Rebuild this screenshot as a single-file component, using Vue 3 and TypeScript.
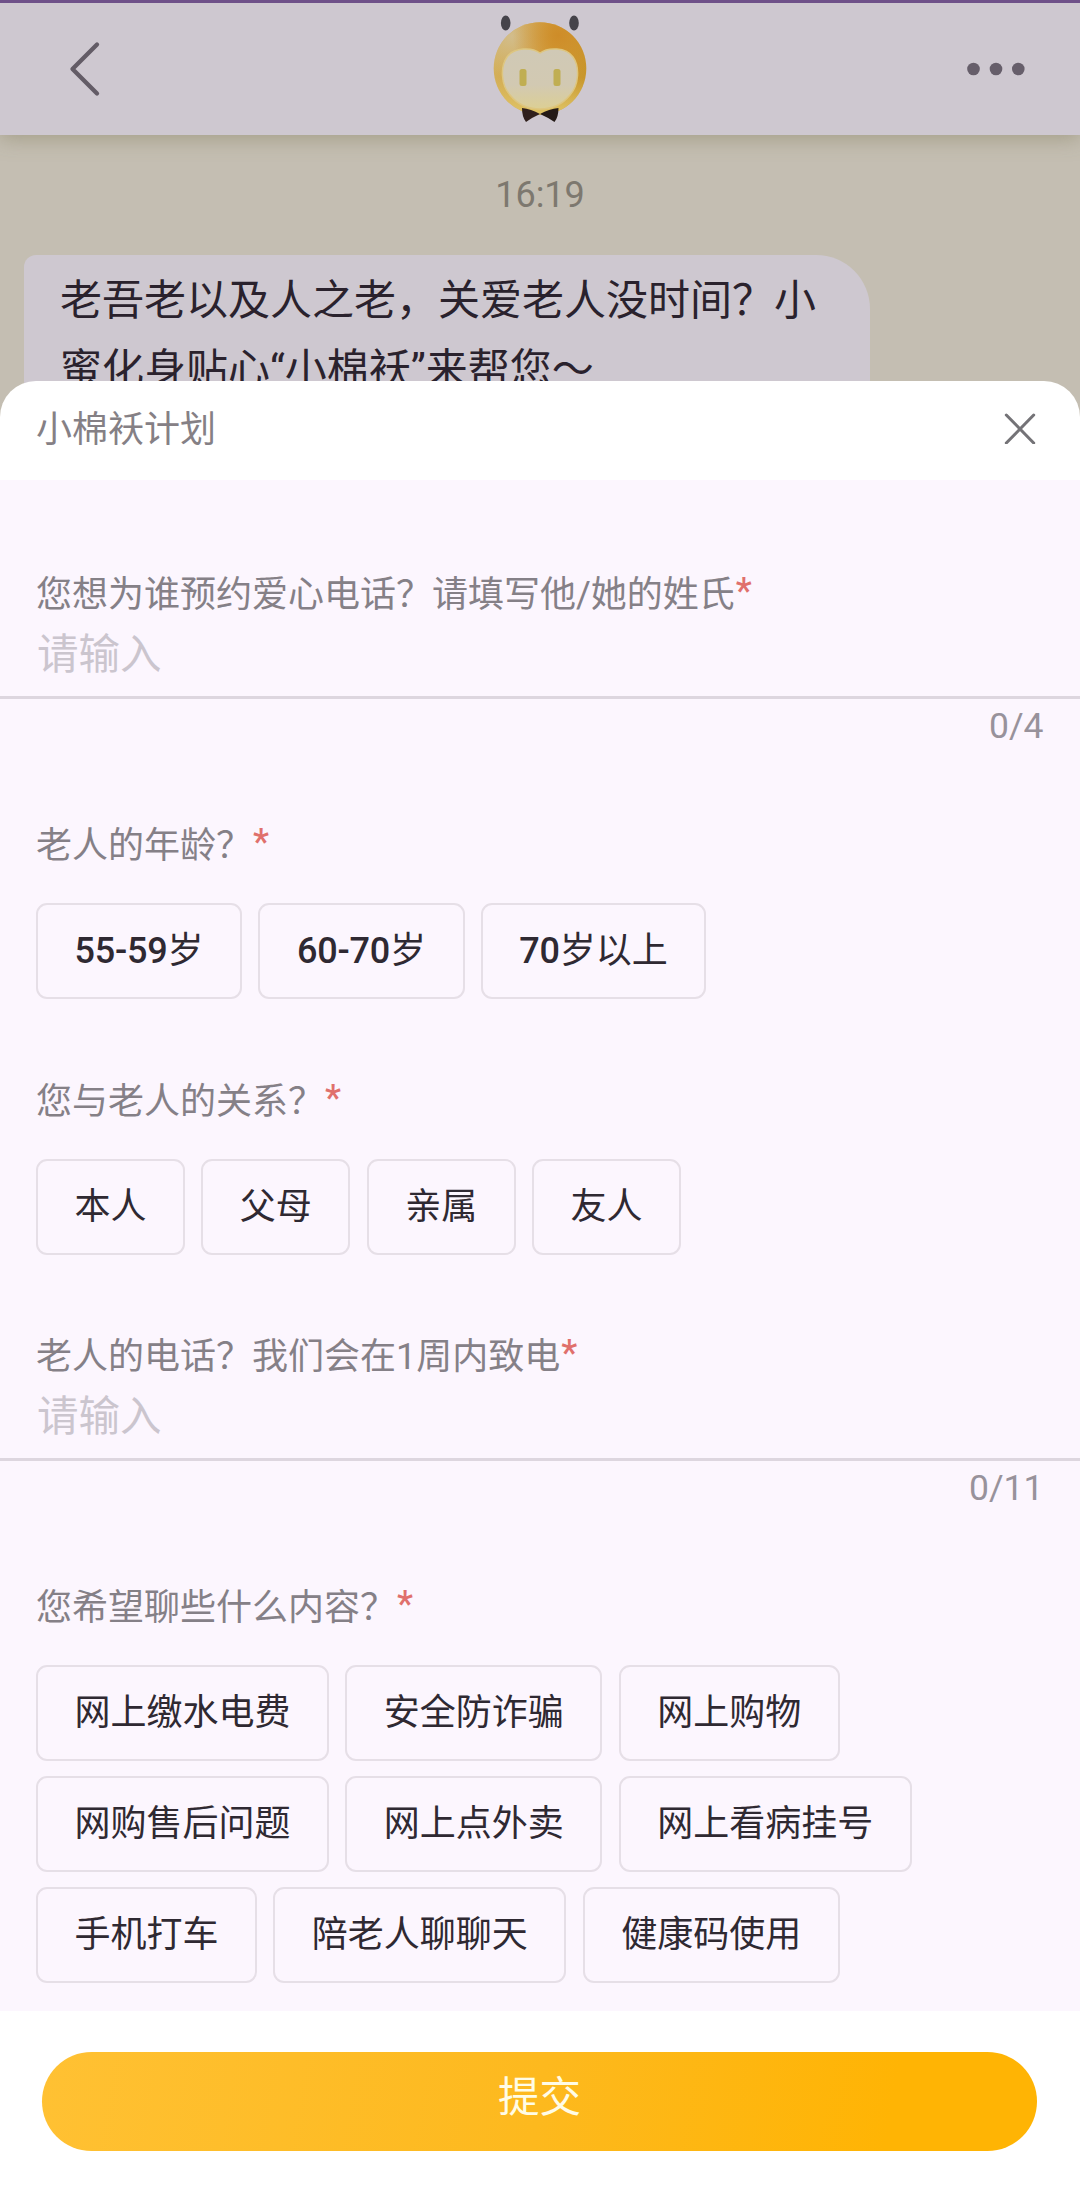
<script setup lang="ts">
interface InputQuestion {
  kind: 'input'
  label: string
  max: number
}
interface ChoiceQuestion {
  kind: 'choice'
  label: string
  options: string[]
}
type Question = InputQuestion | ChoiceQuestion

const questions: Question[] = [
  { kind: 'input', label: '您想为谁预约爱心电话？请填写他/她的姓氏', max: 4 },
  { kind: 'choice', label: '老人的年龄？', options: ['55-59岁', '60-70岁', '70岁以上'] },
  { kind: 'choice', label: '您与老人的关系？', options: ['本人', '父母', '亲属', '友人'] },
  { kind: 'input', label: '老人的电话？我们会在1周内致电', max: 11 },
  {
    kind: 'choice',
    label: '您希望聊些什么内容？',
    options: [
      '网上缴水电费', '安全防诈骗', '网上购物',
      '网购售后问题', '网上点外卖', '网上看病挂号',
      '手机打车', '陪老人聊聊天', '健康码使用',
    ],
  },
]

// Latin digits are set heavier than the Chinese characters beside them
const digits = (s: string): string => s.match(/^[\d-]+/)?.[0] ?? ''
const rest = (s: string): string => s.slice(digits(s).length)
</script>

<template>
  <div class="screen">
    <header class="nav">
      <svg class="back" width="40" height="60" viewBox="0 0 40 60">
        <path d="M32 5.500 L7.500 30 L32 54.500" />
      </svg>
      <svg class="owl" width="110" height="120" viewBox="485 5 110 120">
        <defs>
          <linearGradient id="head" x1="0" y1="0.3" x2="1" y2="0.5">
            <stop offset="0" stop-color="#d3b05a" />
            <stop offset="0.5" stop-color="#d5a544" />
            <stop offset="1" stop-color="#c8962b" />
          </linearGradient>
          <radialGradient id="glow" cx="0.7" cy="0.14" r="0.5">
            <stop offset="0" stop-color="#ce8c28" />
            <stop offset="1" stop-color="#ce8c28" stop-opacity="0" />
          </radialGradient>
          <radialGradient id="pale" cx="0.2" cy="0.15" r="0.45">
            <stop offset="0" stop-color="#d2bd8c" />
            <stop offset="1" stop-color="#d2bd8c" stop-opacity="0" />
          </radialGradient>
          <linearGradient id="sheen" x1="0" y1="0" x2="0" y2="1">
            <stop offset="0.6" stop-color="#dfc567" stop-opacity="0" />
            <stop offset="1" stop-color="#dfc567" />
          </linearGradient>
          <linearGradient id="face" x1="0" y1="0" x2="0" y2="1">
            <stop offset="0" stop-color="#d0c9b6" />
            <stop offset="0.6" stop-color="#d2c9b2" />
            <stop offset="1" stop-color="#dccf94" />
          </linearGradient>
        </defs>
        <circle cx="540" cy="67.500" r="46.300" fill="url(#head)" />
        <circle cx="540" cy="67.500" r="46.300" fill="url(#sheen)" />
        <circle cx="540" cy="67.500" r="46.300" fill="url(#pale)" />
        <circle cx="540" cy="67.500" r="46.300" fill="url(#glow)" />
        <ellipse cx="505.700" cy="22" rx="4.800" ry="7.500" fill="#45434a" />
        <ellipse cx="574" cy="22" rx="4.800" ry="7.500" fill="#45434a" />
        <path
          d="M540 52 C532 46 514 46 507 56 C500 66 501 84 510 94 C518 104 529 108 540 108 C551 108 562 104 570 94 C579 84 580 66 573 56 C566 46 548 46 540 52 Z"
          fill="url(#face)" stroke="#ddc681" stroke-width="1.500"
        />
        <rect x="519.500" y="68" width="7" height="17" rx="2.500" fill="#c0ae52" />
        <rect x="553.500" y="68" width="7" height="17" rx="2.500" fill="#c0ae52" />
        <path d="M522 107 Q531 108 540 113 Q533 116 526 121 Q522 116 522 107 Z" fill="#30201c" />
        <path d="M558.500 107 Q549 108 540 113 Q547 116 554.500 121 Q558.500 116 558.500 107 Z" fill="#241a16" />
      </svg>
      <svg class="more" width="60" height="20" viewBox="0 0 60 20">
        <circle cx="7.500" cy="10" r="6.300" />
        <circle cx="30" cy="10" r="6.300" />
        <circle cx="52.300" cy="10" r="6.300" />
      </svg>
    </header>

    <section class="chat">
      <div class="time">16:19</div>
      <div class="bubble">老吾老以及人之老，关爱老人没时间？小<br />蜜化身贴心“小棉袄”来帮您～</div>
    </section>

    <section class="sheet">
      <div class="sheet-head">
        <span>小棉袄计划</span>
        <svg width="32" height="32" viewBox="0 0 32 32">
          <path d="M2.300 3 L29.700 31 M29.700 3 L2.300 31" />
        </svg>
      </div>

      <main class="form">
        <div v-for="q in questions" :key="q.label" class="question" :class="q.kind">
          <div class="label">{{ q.label }}<span class="star">*</span></div>
          <template v-if="q.kind === 'input'">
            <div class="field">请输入</div>
            <div class="count">0/{{ q.max }}</div>
          </template>
          <div v-else class="chips">
            <div v-for="o in q.options" :key="o" class="chip"><b v-if="digits(o)">{{ digits(o) }}</b>{{ rest(o) }}</div>
          </div>
        </div>
      </main>

      <footer class="foot">
        <div class="submit">提交</div>
      </footer>
    </section>
  </div>
</template>

<style>
body {
  margin: 0;
}
</style>

<style scoped>
.screen {
  box-sizing: border-box;
  width: 1080px;
  height: 2193px;
  overflow: hidden;
  display: flex;
  flex-direction: column;
  background: #c4beb2;
  font-family: Roboto, "Noto Sans CJK SC", sans-serif;
  font-size: 36px;
}
.nav {
  box-sizing: border-box;
  flex: none;
  height: 135px;
  padding: 0 54px 0 65px;
  border-top: 3px solid #6f5189;
  display: grid;
  grid-template-columns: 1fr 110px 1fr;
  align-items: center;
  background: #cec8d0;
  box-shadow: 0 3px 20px rgba(120, 116, 80, 0.45);
}
.back path {
  fill: none;
  stroke: #635c66;
  stroke-width: 4.300;
  stroke-linecap: round;
  stroke-linejoin: round;
}
.owl {
  margin: -7px 0 0 -5.500px;
}
.more {
  justify-self: end;
  fill: #665e6a;
}
.chat {
  flex: none;
  height: 246px;
}
.time {
  box-sizing: border-box;
  height: 120px;
  padding-top: 35px;
  line-height: 50px;
  text-align: center;
  color: #7d786f;
}
.bubble {
  box-sizing: border-box;
  width: 846px;
  height: 150px;
  margin-left: 24px;
  padding: 11px 0 0 36px;
  border-radius: 12px 54px 0 0;
  background: #cec8d0;
  color: #2a222d;
  font-size: 42px;
  line-height: 69px;
  white-space: nowrap;
}
.sheet {
  position: relative;
  flex: 1;
  display: flex;
  flex-direction: column;
  border-radius: 36px 36px 0 0;
  background: #fff;
}
.sheet-head {
  flex: none;
  box-sizing: border-box;
  height: 99px;
  padding: 0 44px 6px 36px;
  display: flex;
  align-items: center;
  justify-content: space-between;
  color: #858085;
}
.sheet-head span {
  margin-top: -4px;
}
.sheet-head svg path {
  fill: none;
  stroke: #747377;
  stroke-width: 3;
  stroke-linecap: round;
}
.form {
  flex: none;
  box-sizing: border-box;
  height: 1531px;
  padding-top: 90px;
  background: #fcf6fe;
}
.label {
  height: 50px;
  padding-left: 36px;
  line-height: 50px;
  color: #858087;
}
.star {
  position: relative;
  top: -4px;
  left: 1px;
  font-weight: 500;
  color: #e0706c;
}
.field {
  height: 71px;
  margin-top: 5px;
  padding-left: 37px;
  border-bottom: 3px solid #ddd6df;
  font-size: 41.500px;
  line-height: 60px;
  color: #cbc5ce;
}
.count {
  height: 50px;
  margin-top: 2px;
  padding-right: 36.500px;
  line-height: 50px;
  text-align: right;
  font-size: 35.500px;
  color: #98929b;
}
.question.input {
  margin-bottom: 70px;
}
.question.choice {
  margin-bottom: 77.500px;
}
.chips {
  display: flex;
  flex-wrap: wrap;
  gap: 15px 16.300px;
  margin-top: 32px;
  padding: 0 100px 0 36px;
}
.chip {
  box-sizing: border-box;
  height: 96px;
  padding: 0 36.500px;
  border: 2px solid #e6dfe7;
  border-radius: 11px;
  line-height: 92px;
  color: #2f2932;
  white-space: nowrap;
}
.chip b {
  font-weight: 500;
  letter-spacing: -0.200px;
}
.foot {
  padding: 41px 43px 0 42px;
}
.submit {
  height: 99px;
  border-radius: 50px;
  background: linear-gradient(100deg, #ffc133 0%, #fdb91e 50%, #ffb404 85%);
  color: #fffce6;
  font-size: 41.500px;
  line-height: 92px;
  text-align: center;
}
</style>
